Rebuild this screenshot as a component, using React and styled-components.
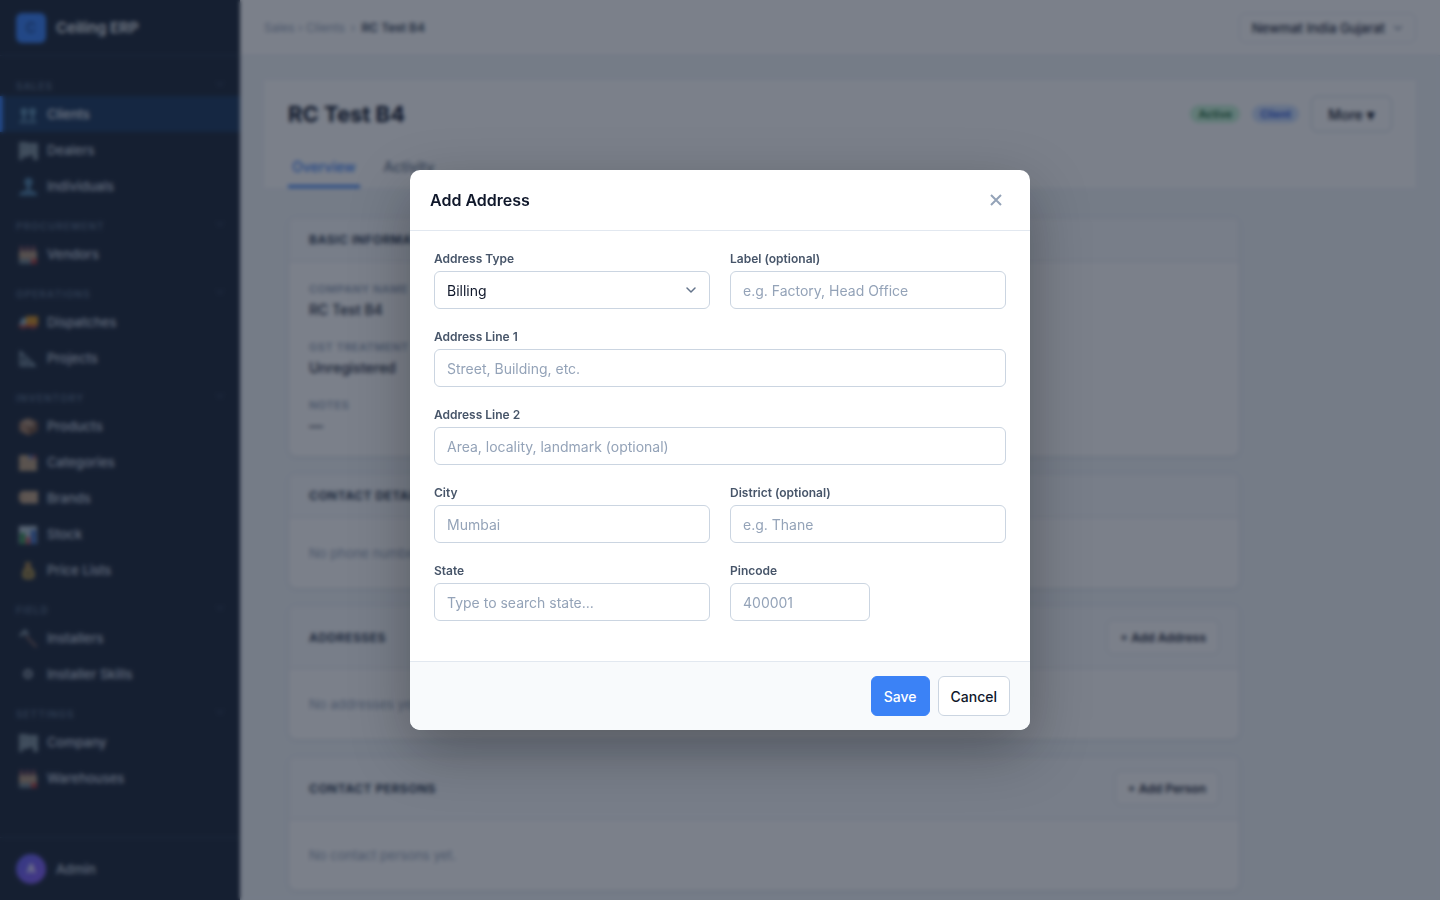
import React, { useState } from "react";
import styled, { createGlobalStyle } from "styled-components";

const GlobalStyle = createGlobalStyle`
  *,
  *::before,
  *::after {
    box-sizing: border-box;
  }

  body {
    margin: 0;
    color: #0f172a;
    background: #f1f5f9;
    font-family: Inter, "Liberation Sans", sans-serif;
    font-size: 14px;
    line-height: 20px;
  }

  button,
  input,
  select {
    font-family: inherit;
    font-size: 14px;
  }
`;

const Layout = styled.div`
  display: flex;
  height: 100vh;
  overflow: hidden;
`;

const Sidebar = styled.aside`
  display: flex;
  flex-direction: column;
  flex: 0 0 240px;
  color: #cbd5e1;
  background: #1e293b;
`;

const Brand = styled.div`
  display: flex;
  align-items: center;
  gap: 10px;
  height: 56px;
  padding: 0 16px;
  border-bottom: 1px solid #334155;
  color: #f1f5f9;
  font-size: 15px;
  font-weight: 600;
`;

const BrandLogo = styled.span`
  display: grid;
  place-items: center;
  width: 30px;
  height: 30px;
  border-radius: 6px;
  color: #1e4b94;
  background: #3b82f6;
  font-size: 14px;
`;

const Nav = styled.nav`
  flex: 1;
  padding-top: 8px;
`;

const NavHeading = styled.div`
  display: flex;
  justify-content: space-between;
  padding: 16px 16px 4px;
  color: #52657f;
  font-size: 10px;
  font-weight: 700;
  line-height: 12px;
  letter-spacing: 1px;
  text-transform: uppercase;
`;

const NavItem = styled.a`
  display: flex;
  align-items: center;
  gap: 8px;
  height: 36px;
  padding: 0 16px;
  border-left: 3px solid ${({ $active }) => ($active ? "#3b82f6" : "transparent")};
  color: ${({ $active }) => ($active ? "#f1f5f9" : "#cbd5e1")};
  background: ${({ $active }) => ($active ? "#1e3a5f" : "transparent")};
  font-size: 13px;
  font-weight: 500;
  text-decoration: none;
`;

const NavIcon = styled.svg`
  width: 20px;
  height: 20px;
  padding: 2px 2px 0 0;
  opacity: 0.85;
  overflow: visible;
`;

const UserBar = styled.div`
  display: flex;
  align-items: center;
  gap: 10px;
  padding: 16px;
  border-top: 1px solid #334155;
  font-size: 13px;
  font-weight: 500;
`;

const Avatar = styled.span`
  display: grid;
  place-items: center;
  width: 30px;
  height: 30px;
  border-radius: 50%;
  color: #ffffff;
  background: linear-gradient(135deg, #6366f1, #8b5cf6);
  font-size: 12px;
  font-weight: 600;
`;

const Main = styled.div`
  flex: 1;
  min-width: 0;
`;

const TopBar = styled.header`
  display: flex;
  align-items: center;
  justify-content: space-between;
  height: 56px;
  padding: 0 24px;
  border-bottom: 1px solid #e2e8f0;
  background: #ffffff;
`;

const Breadcrumb = styled.div`
  display: flex;
  gap: 6px;
  color: #94a3b8;
  font-size: 12px;

  strong {
    color: #334155;
    font-weight: 600;
  }
`;

const CompanyButton = styled.button`
  display: flex;
  align-items: center;
  gap: 8px;
  height: 30px;
  padding: 0 12px;
  border: 1px solid #e2e8f0;
  border-radius: 6px;
  color: #1e293b;
  background: #ffffff;
  font-size: 13px;
  font-weight: 500;
`;

const Page = styled.main`
  padding: 24px;
`;

const PageHeader = styled.section`
  padding: 16px 24px 0;
  background: #ffffff;
`;

const TitleRow = styled.div`
  display: flex;
  align-items: center;
  gap: 12px;
`;

const Title = styled.h1`
  flex: 1;
  margin: 0;
  font-size: 22px;
  font-weight: 700;
  line-height: 28px;
`;

const Badge = styled.span`
  padding: 0 8px;
  border-radius: 9px;
  color: ${({ $tone }) => ($tone === "green" ? "#166534" : "#1d4ed8")};
  background: ${({ $tone }) => ($tone === "green" ? "#c8f5d8" : "#cfe1fe")};
  font-size: 11px;
  font-weight: 600;
  line-height: 18px;
`;

const MoreButton = styled.button`
  height: 36px;
  padding: 0 16px;
  border: 1px solid #cbd5e1;
  border-radius: 6px;
  color: #0f172a;
  background: #ffffff;
  font-weight: 500;
`;

const Caret = styled.span`
  font-family: "DejaVu Sans Mono", monospace;
  font-size: 14px;
`;

const Tabs = styled.div`
  display: flex;
  gap: 20px;
  margin-top: 20px;
`;

const Tab = styled.button`
  padding: 4px 4px 8px;
  border: 0;
  border-bottom: 3px solid ${({ $active }) => ($active ? "#3b82f6" : "transparent")};
  color: ${({ $active }) => ($active ? "#3b82f6" : "#64748b")};
  background: none;
  font-weight: 500;
  line-height: 21px;
`;

const Panels = styled.div`
  display: flex;
  flex-direction: column;
  gap: 16px;
  max-width: 1000px;
  padding: 29px 24px;
`;

const Panel = styled.section`
  border: 1px solid #e2e8f0;
  border-radius: 8px;
  background: #ffffff;
  box-shadow: 0 1px 3px rgba(0, 0, 0, 0.06);
  overflow: hidden;
`;

const PanelHeader = styled.div`
  display: flex;
  align-items: center;
  justify-content: space-between;
  padding: 14px 20px;
  border-bottom: 1px solid #e2e8f0;
  background: #f8fafc;
`;

const PanelTitle = styled.h2`
  margin: 0;
  color: #334155;
  font-size: 12px;
  font-weight: 700;
  line-height: 15px;
  letter-spacing: 0.5px;
  text-transform: uppercase;
`;

const PanelButton = styled.button`
  height: 34px;
  padding: 0 12px;
  border: 1px solid #e2e8f0;
  border-radius: 6px;
  color: #1e293b;
  background: #ffffff;
  font-size: 12px;
  font-weight: 600;
`;

const Details = styled.dl`
  display: grid;
  gap: 20px;
  margin: 0;
  padding: 20px;

  dt {
    margin-bottom: 4px;
    color: #94a3b8;
    font-size: 11px;
    font-weight: 600;
    line-height: 14px;
    letter-spacing: 0.5px;
    text-transform: uppercase;
  }

  dd {
    margin: 0;
    color: #1e293b;
    font-weight: 500;
  }
`;

const EmptyText = styled.p`
  margin: 0;
  padding: 25px 20px;
  color: #94a3b8;
  font-size: 13px;
`;

const Overlay = styled.div`
  position: fixed;
  inset: 0;
  display: flex;
  align-items: center;
  justify-content: center;
  background: rgba(15, 23, 42, 0.55);
  backdrop-filter: blur(2px);
`;

const Modal = styled.form`
  width: 100%;
  max-width: 620px;
  border-radius: 10px;
  background: #ffffff;
  box-shadow: 0 20px 60px rgba(0, 0, 0, 0.3);
  overflow: hidden;
`;

const ModalHeader = styled.div`
  display: flex;
  align-items: center;
  justify-content: space-between;
  padding: 16px 20px;
  border-bottom: 1px solid #e2e8f0;
`;

const ModalTitle = styled.h2`
  margin: 0;
  font-size: 16px;
  font-weight: 600;
  line-height: 28px;
`;

const CloseButton = styled.button`
  display: grid;
  place-items: center;
  width: 28px;
  height: 28px;
  padding: 0;
  border: 0;
  color: #94a3b8;
  background: none;
  cursor: pointer;
`;

const ModalBody = styled.div`
  padding: 20px 24px;
`;

const FieldRow = styled.div`
  display: flex;
  gap: 20px;
  margin-bottom: 20px;
`;

const FieldGroup = styled.div`
  flex: 1;
  min-width: 0;
`;

const Label = styled.label`
  display: block;
  margin-bottom: 5px;
  color: #475569;
  font-size: 12px;
  font-weight: 600;
  line-height: 15px;
`;

const Input = styled.input`
  display: block;
  width: 100%;
  max-width: ${({ $short }) => ($short ? "140px" : "none")};
  height: 38px;
  padding: 0 12px;
  border: 1px solid #cbd5e1;
  border-radius: 6px;
  color: #0f172a;
  background: #ffffff;
  outline: none;

  &::placeholder {
    color: #94a3b8;
  }

  &:focus {
    border-color: #3b82f6;
  }
`;

const SelectWrapper = styled.div`
  position: relative;

  svg {
    position: absolute;
    top: 13px;
    right: 13px;
    pointer-events: none;
  }
`;

const Select = styled(Input)`
  appearance: none;
`;

const ModalFooter = styled.div`
  display: flex;
  justify-content: flex-end;
  gap: 8px;
  padding: 14px 20px;
  border-top: 1px solid #e2e8f0;
  background: #f8fafc;
`;

const Button = styled.button`
  height: 40px;
  padding: 0 12px;
  border: 1px solid ${({ $primary }) => ($primary ? "#3b82f6" : "#cbd5e1")};
  border-radius: 6px;
  color: ${({ $primary }) => ($primary ? "#ffffff" : "#0f172a")};
  background: ${({ $primary }) => ($primary ? "#3b82f6" : "#ffffff")};
  font-weight: 500;
  cursor: pointer;
`;

const icons = {
  people: (
    <g fill="#6fa3c4">
      <circle cx="5" cy="5.5" r="3.4" />
      <circle cx="13.5" cy="5.5" r="3.4" />
      <path d="M3.5 8h3v5h-3zM12 8h3v5h-3z" />
      <path
        d="M0 17.5c0-3 2-4 4.8-4s4.400 1 4.400 2.500c0-1.500 1.600-2.500 4.300-2.500s4.500 1 4.500 4z"
        opacity=".7"
      />
    </g>
  ),
  person: (
    <g fill="#5b93bd">
      <circle cx="9.5" cy="4" r="4.3" />
      <path d="M7.5 7h4v5h-4z" />
      <path d="M0 17.5c0-3 3-5 9.3-5s9 2 9 5z" />
    </g>
  ),
  building: (
    <g>
      <path d="M0 0h8v1h11v17h-5v-5H10v2H5v-1H4v4H0z" fill="#8fa3ad" />
      <path d="M3 4h2v2H3zM11 5h2v2h-2z" fill="#5d7380" />
    </g>
  ),
  factory: (
    <g>
      <path d="M1 0h3v5H1zM7 0h3v5H7zM13 0h3v5h-3z" fill="#a8606a" />
      <path d="M0 5h18v8H0z" fill="#c8a888" />
      <path d="M0 13h12v5H0z" fill="#7d9099" />
      <path d="M12 13h6v5h-6z" fill="#c9403c" />
    </g>
  ),
  truck: (
    <g>
      <path d="M7 2h12v9.5H7z" fill="#f0a020" />
      <path d="M0 11l3-7h4v7z" fill="#9fc8dc" />
      <path d="M0 11h18v2.5H0z" fill="#d8402f" />
      <circle cx="4" cy="13.5" r="2" fill="#9c4a4a" />
      <circle cx="14" cy="13.5" r="2" fill="#9c4a4a" />
    </g>
  ),
  ruler: (
    <path d="M1.5 2v13.5h14zM5 10.5v2h2.5z" fill="none" stroke="#9db8c8" strokeWidth="2" />
  ),
  box: (
    <g>
      <path d="M9.5 0l9 4v9l-9 4.5-9-4.500V4z" fill="#b58a68" />
      <path d="M9.5 8l9-4v9l-9 4.500z" fill="#80583c" />
      <path d="M4 2.5l9 4v3" fill="none" stroke="#dcc0a4" strokeWidth="2" />
    </g>
  ),
  folders: (
    <g>
      <path d="M1 1h8l2 3h7v13H0V3z" fill="#d0b088" />
      <path d="M10 1h4v4h-4z" fill="#5878c0" />
      <path d="M14 1h3v4h-3z" fill="#c05858" />
    </g>
  ),
  tag: (
    <g>
      <path d="M3 1h16v12.5H3L0 10V4z" fill="#dcb890" />
      <circle cx="3.5" cy="7" r="1" fill="#80664c" />
    </g>
  ),
  chart: (
    <g>
      <path d="M0 0h18v18H0z" fill="#c8d8e4" />
      <path d="M1 7h5v11H1z" fill="#2f9a4a" />
      <path d="M7 11h4v7H7z" fill="#d04848" />
      <path d="M12 4h5v14h-5z" fill="#3a6fd0" />
    </g>
  ),
  money: (
    <g>
      <path
        d="M7 4L5.5 0h7L11 4c3 2 5 5 5 9 0 3-2 4.500-6.500 4.500S3 16 3 13c0-4 1.500-7 4-9z"
        fill="#b89a48"
      />
      <path d="M6.5 4h5" stroke="#c06848" strokeWidth="1.5" />
      <circle cx="9.5" cy="11.5" r="3" fill="#8a7540" />
    </g>
  ),
  hammer: (
    <g fill="none">
      <path d="M1 6l5-5 3 4" stroke="#94a8b4" strokeWidth="3" />
      <path d="M7 6l10.5 11" stroke="#9c7468" strokeWidth="2" />
    </g>
  ),
  gear: <circle cx="9" cy="8" r="3.5" fill="none" stroke="#b4c0cc" strokeWidth="2.5" />,
};

const navGroups = [
  {
    title: "Sales",
    items: [
      ["people", "Clients"],
      ["building", "Dealers"],
      ["person", "Individuals"],
    ],
  },
  { title: "Procurement", items: [["factory", "Vendors"]] },
  {
    title: "Operations",
    items: [
      ["truck", "Dispatches"],
      ["ruler", "Projects"],
    ],
  },
  {
    title: "Inventory",
    items: [
      ["box", "Products"],
      ["folders", "Categories"],
      ["tag", "Brands"],
      ["chart", "Stock"],
      ["money", "Price Lists"],
    ],
  },
  {
    title: "Field",
    items: [
      ["hammer", "Installers"],
      ["gear", "Installer Skills"],
    ],
  },
  {
    title: "Settings",
    items: [
      ["building", "Company"],
      ["factory", "Warehouses"],
    ],
  },
];

const Chevron = ({ size = 12, color = "#64748b" }) => (
  <svg width={size} height={size} viewBox="0 0 12 12" fill="none" aria-hidden="true">
    <path
      d="M2 4l4 4 4-4"
      stroke={color}
      strokeWidth="1.5"
      strokeLinecap="round"
      strokeLinejoin="round"
    />
  </svg>
);

const Field = ({ id, label, ...rest }) => (
  <FieldGroup>
    <Label htmlFor={id}>{label}</Label>
    <Input id={id} type="text" {...rest} />
  </FieldGroup>
);

const AddressModal = ({ onClose }) => {
  const [type, setType] = useState("Billing");

  const handleSubmit = (e) => {
    e.preventDefault();
    onClose();
  };

  return (
    <Overlay>
      <Modal role="dialog" aria-labelledby="modal-title" onSubmit={handleSubmit}>
        <ModalHeader>
          <ModalTitle id="modal-title">Add Address</ModalTitle>
          <CloseButton type="button" aria-label="Close" onClick={onClose}>
            <svg width="12" height="12" viewBox="0 0 12 12" aria-hidden="true">
              <path d="M1 1l10 10M11 1L1 11" stroke="currentColor" strokeWidth="2" />
            </svg>
          </CloseButton>
        </ModalHeader>
        <ModalBody>
          <FieldRow>
            <FieldGroup>
              <Label htmlFor="type">Address Type</Label>
              <SelectWrapper>
                <Select
                  as="select"
                  id="type"
                  value={type}
                  onChange={(e) => setType(e.target.value)}
                >
                  <option>Billing</option>
                  <option>Shipping</option>
                </Select>
                <Chevron />
              </SelectWrapper>
            </FieldGroup>
            <Field id="label" label="Label (optional)" placeholder="e.g. Factory, Head Office" />
          </FieldRow>
          <FieldRow>
            <Field id="line1" label="Address Line 1" placeholder="Street, Building, etc." />
          </FieldRow>
          <FieldRow>
            <Field
              id="line2"
              label="Address Line 2"
              placeholder="Area, locality, landmark (optional)"
            />
          </FieldRow>
          <FieldRow>
            <Field id="city" label="City" placeholder="Mumbai" />
            <Field id="district" label="District (optional)" placeholder="e.g. Thane" />
          </FieldRow>
          <FieldRow>
            <Field id="state" label="State" placeholder="Type to search state..." />
            <Field id="pincode" label="Pincode" placeholder="400001" $short />
          </FieldRow>
        </ModalBody>
        <ModalFooter>
          <Button type="submit" $primary>
            Save
          </Button>
          <Button type="button" onClick={onClose}>
            Cancel
          </Button>
        </ModalFooter>
      </Modal>
    </Overlay>
  );
};

const App = () => {
  const [modalOpen, setModalOpen] = useState(true);

  return (
    <>
      <GlobalStyle />
      <Layout>
        <Sidebar>
          <Brand>
            <BrandLogo>C</BrandLogo>
            Ceiling ERP
          </Brand>
          <Nav>
            {navGroups.map(({ title, items }) => (
              <div key={title}>
                <NavHeading>
                  {title}
                  <Chevron size={8} color="#52657f" />
                </NavHeading>
                {items.map(([icon, name]) => (
                  <NavItem href="#" key={name} $active={name === "Clients"}>
                    <NavIcon viewBox="0 0 18 18" aria-hidden="true">
                      {icons[icon]}
                    </NavIcon>
                    {name}
                  </NavItem>
                ))}
              </div>
            ))}
          </Nav>
          <UserBar>
            <Avatar>A</Avatar>
            Admin
          </UserBar>
        </Sidebar>
        <Main>
          <TopBar>
            <Breadcrumb>
              <span>Sales › Clients</span>
              <span>›</span>
              <strong>RC Test B4</strong>
            </Breadcrumb>
            <CompanyButton>
              Newmat India Gujarat
              <Chevron size={10} />
            </CompanyButton>
          </TopBar>
          <Page>
            <PageHeader>
              <TitleRow>
                <Title>RC Test B4</Title>
                <Badge $tone="green">Active</Badge>
                <Badge $tone="blue">Client</Badge>
                <MoreButton>
                  More <Caret>▼</Caret>
                </MoreButton>
              </TitleRow>
              <Tabs>
                <Tab $active>Overview</Tab>
                <Tab>Activity</Tab>
              </Tabs>
            </PageHeader>
            <Panels>
              <Panel>
                <PanelHeader>
                  <PanelTitle>Basic Information</PanelTitle>
                </PanelHeader>
                <Details>
                  <div>
                    <dt>Company Name</dt>
                    <dd>RC Test B4</dd>
                  </div>
                  <div>
                    <dt>GST Treatment</dt>
                    <dd>Unregistered</dd>
                  </div>
                  <div>
                    <dt>Notes</dt>
                    <dd>—</dd>
                  </div>
                </Details>
              </Panel>
              <Panel>
                <PanelHeader>
                  <PanelTitle>Contact Details</PanelTitle>
                </PanelHeader>
                <EmptyText>No phone numbers yet.</EmptyText>
              </Panel>
              <Panel>
                <PanelHeader>
                  <PanelTitle>Addresses</PanelTitle>
                  <PanelButton onClick={() => setModalOpen(true)}>+ Add Address</PanelButton>
                </PanelHeader>
                <EmptyText>No addresses yet.</EmptyText>
              </Panel>
              <Panel>
                <PanelHeader>
                  <PanelTitle>Contact Persons</PanelTitle>
                  <PanelButton>+ Add Person</PanelButton>
                </PanelHeader>
                <EmptyText>No contact persons yet.</EmptyText>
              </Panel>
            </Panels>
          </Page>
        </Main>
      </Layout>
      {modalOpen && <AddressModal onClose={() => setModalOpen(false)} />}
    </>
  );
};

export default App;
